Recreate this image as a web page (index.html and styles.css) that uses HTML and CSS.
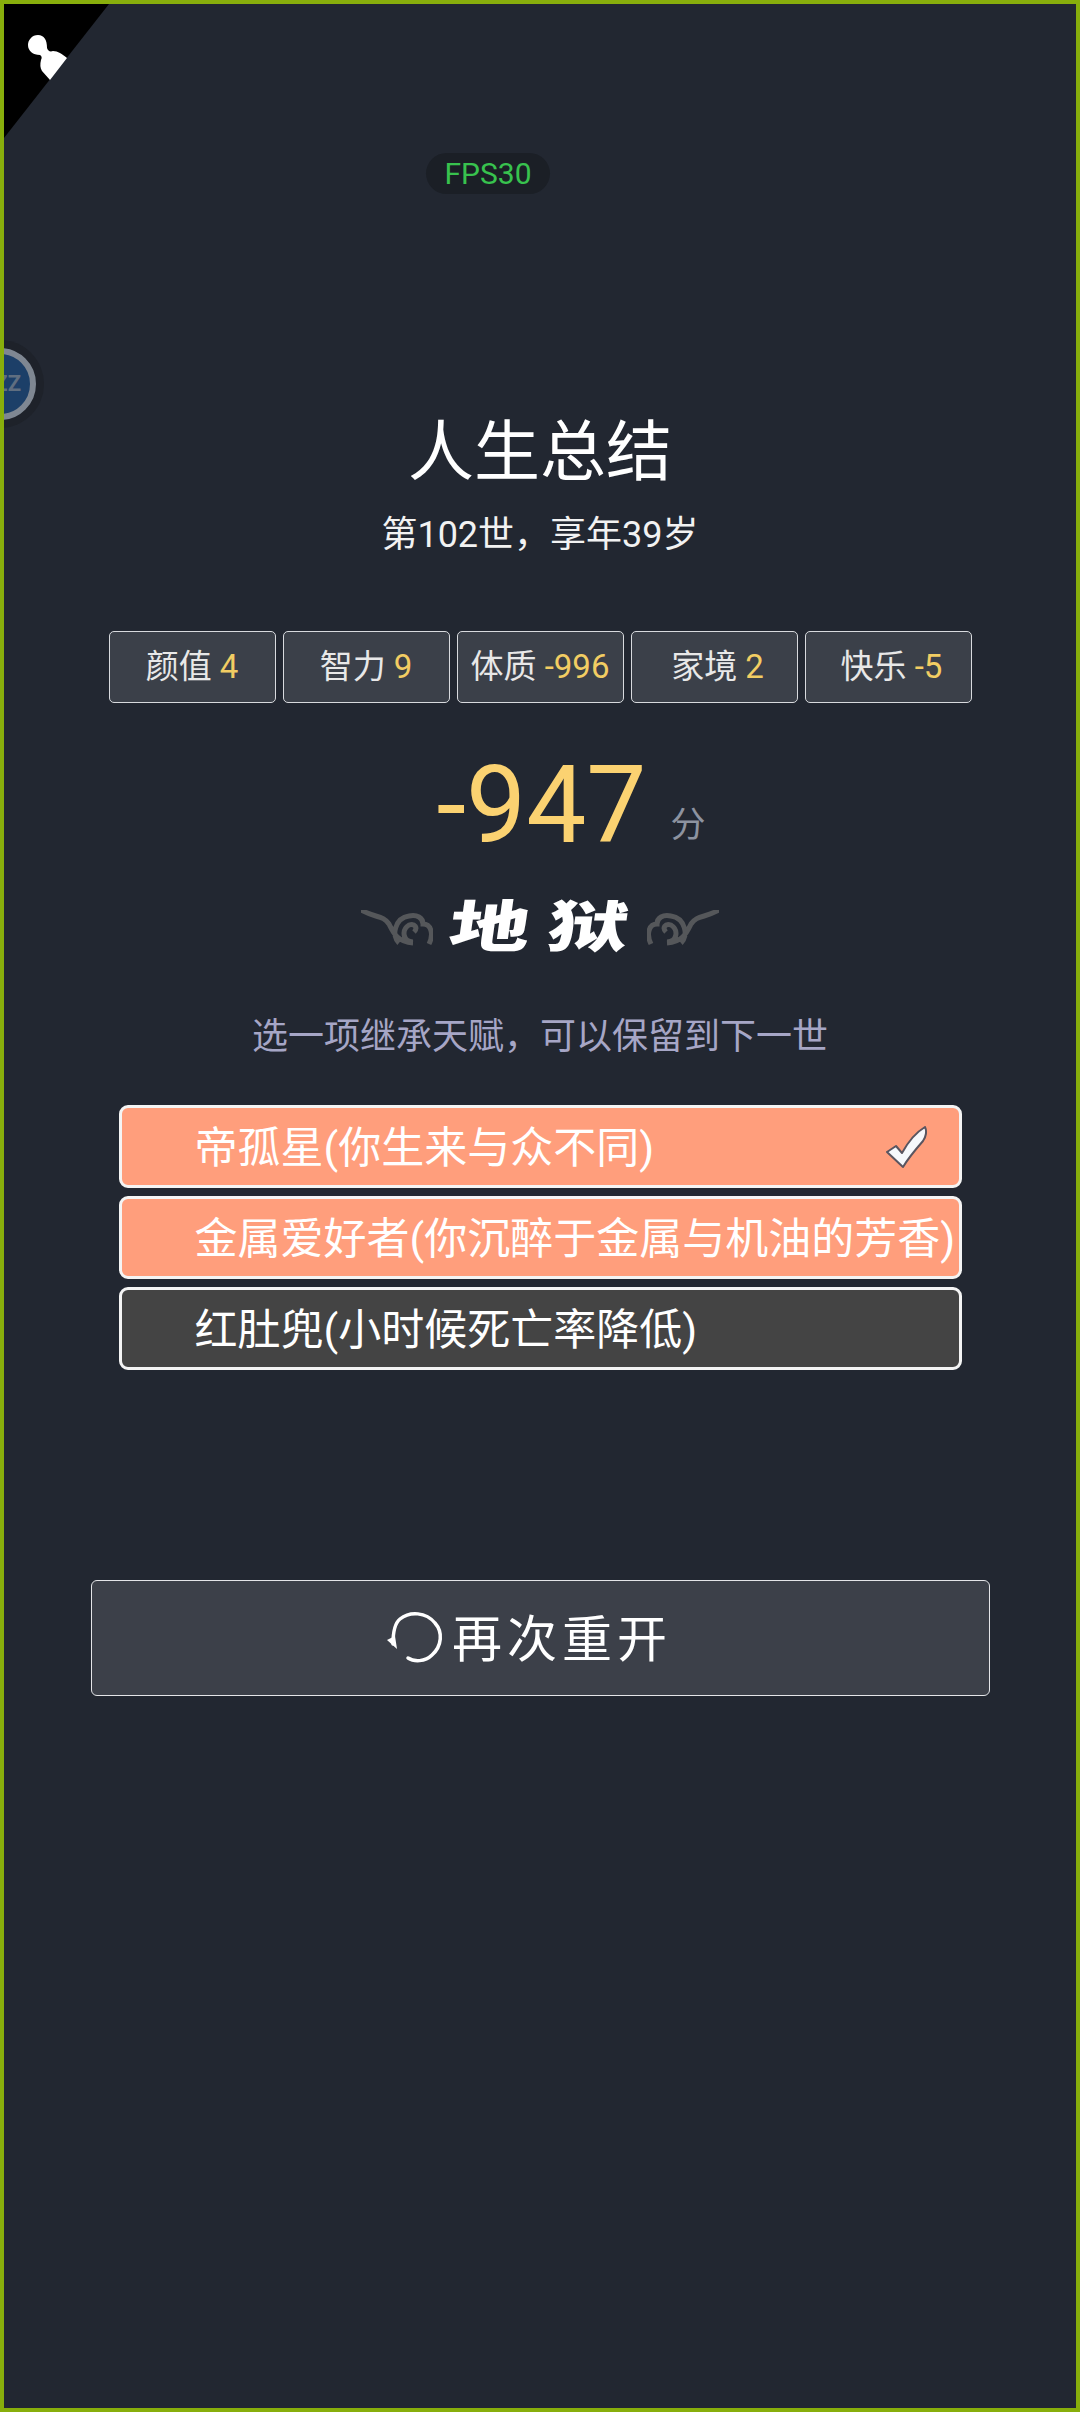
FILE: index.html
```html
<!DOCTYPE html>
<html lang="zh-CN">
<head>
    <meta charset="UTF-8">
    <title>人生总结</title>
    <link rel="stylesheet" href="styles.css">
</head>
<body>
    <div class="frame">
        <svg class="corner" width="105" height="134" viewBox="0 0 105 134">
            <polygon points="0,0 105,0 0,134" fill="#000"/>
            <path d="M34 31 C28 31 24 36 24 41 C24 47 29 51 36 51 C38 52 38 54 37 56 C36 60 36 64 38 67 L46 76 L63 54 C58 50 54 47 49 47 C46 48 44 47 43 44 C43 36 40 31 34 31 Z" fill="#fff"/>
        </svg>
        <div class="fps">FPS30</div>
        <div class="ball"><span>ZZ</span></div>

        <div class="main">
            <h1 class="title">人生总结</h1>
            <p class="sub">第102世，享年39岁</p>

            <div class="stats">
                <div class="stat">颜值 <b>4</b></div>
                <div class="stat">智力 <b>9</b></div>
                <div class="stat">体质 <b>-996</b></div>
                <div class="stat off">家境 <b>2</b></div>
                <div class="stat off">快乐 <b>-5</b></div>
            </div>

            <div class="score">-947<span>分</span></div>

            <div class="rank">
                <svg class="cloud" width="72" height="36" viewBox="0 0 72 36">
                    <path d="M0 0 C14 8 22 5 28 14 C32 22 36 32 52 33 M38 33 C30 26 34 8 48 6 C56 4 62 8 62 14 C70 14 73 24 68 34 M52 32 C42 32 40 20 48 15 C54 13 57 18 53 22" fill="none" stroke="#55575a" stroke-width="5"/>
                </svg>
                <span class="rank-text">地狱</span>
                <svg class="cloud flip" width="72" height="36" viewBox="0 0 72 36">
                    <path d="M0 0 C14 8 22 5 28 14 C32 22 36 32 52 33 M38 33 C30 26 34 8 48 6 C56 4 62 8 62 14 C70 14 73 24 68 34 M52 32 C42 32 40 20 48 15 C54 13 57 18 53 22" fill="none" stroke="#55575a" stroke-width="5"/>
                </svg>
            </div>

            <p class="prompt">选一项继承天赋，可以保留到下一世</p>

            <div class="options">
                <div class="option picked"><span class="option-text">帝孤星(你生来与众不同)</span>
                    <svg class="check" width="44" height="42" viewBox="0 0 44 42">
                        <path d="M2 26 L11 20 L17 27 C23 16 30 7 40 1 C42 5 41 11 38 15 C31 23 24 31 18 41 Z" fill="#f6f8fc" stroke="#5a5560" stroke-width="2" stroke-linejoin="round"/>
                    </svg>
                </div>
                <div class="option picked"><span class="option-text">金属爱好者(你沉醉于金属与机油的芳香)</span></div>
                <div class="option"><span class="option-text">红肚兜(小时候死亡率降低)</span></div>
            </div>

            <button class="again">
                <svg width="58" height="54" viewBox="-2 -1 58 54">
                    <path d="M20 46 C26 50 37 50 44 43 C54 34 55 20 47 11 C38 0 22 -1 12 7 C7 11 5 20 5 32" fill="none" stroke="#fff" stroke-width="3.5" stroke-linecap="round"/>
                    <path d="M-1 28 L9 37 L7 24 Z" fill="#fff"/>
                </svg>
                <span class="again-text">再次重开</span>
            </button>
        </div>
    </div>
</body>
</html>
```

FILE: styles.css
```css
html, body {
    margin: 0;
    padding: 0;
    background-color: #222731;
    font-family: Roboto, "Noto Sans CJK SC", sans-serif;
    color: #ffffff;
}

.frame {
    position: relative;
    box-sizing: border-box;
    width: 1080px;
    height: 2412px;
    border: 4px solid #88ae0c;
    overflow: hidden;
}

.corner {
    position: absolute;
    top: 0;
    left: 0;
}

.fps {
    position: absolute;
    top: 149px;
    left: 422px;
    width: 124px;
    height: 41px;
    border-radius: 21px;
    background-color: #1b1f26;
    color: #38c24e;
    font-size: 30px;
    line-height: 41px;
    text-align: center;
}

.ball {
    position: absolute;
    top: 344px;
    left: -40px;
    box-sizing: border-box;
    width: 72px;
    height: 72px;
    padding-right: 9px;
    border: 6px solid #7f8792;
    border-radius: 50%;
    background-color: #1c3f68;
    box-shadow: 0 0 0 8px #1e222a;
    color: #5f6e80;
    font-size: 22px;
    font-weight: bold;
    line-height: 60px;
    text-align: right;
}

.main {
    display: flex;
    flex-direction: column;
    align-items: center;
    padding-top: 409px;
}

.title {
    margin: 0;
    font-size: 66px;
    font-weight: normal;
    line-height: 80px;
}

.sub {
    margin: 17px 0 0;
    font-size: 36px;
    line-height: 50px;
    color: #f2f2f2;
}

.stats {
    display: grid;
    grid-template-columns: repeat(5, 167px);
    gap: 7px;
    margin-top: 71px;
}

.stat {
    box-sizing: border-box;
    height: 72px;
    border: 1.5px solid #d8dade;
    border-radius: 5px;
    background-color: #3b4049;
    font-size: 33px;
    line-height: 69px;
    text-align: center;
    color: #e8e8e8;
}

.stat.off {
    padding-left: 7px;
}

.stat b {
    font-weight: normal;
    color: #f2cd63;
}

.score {
    margin-top: 38px;
    height: 130px;
    padding-left: 62px;
    font-size: 107px;
    line-height: 130px;
    color: #fbd271;
}

.score span {
    margin-left: 24px;
    font-size: 35px;
    color: #8d93a0;
    vertical-align: 5px;
}

.rank {
    display: flex;
    align-items: center;
    justify-content: center;
    gap: 27px;
    height: 80px;
    margin-top: 17px;
}

.rank-text {
    font-size: 72px;
    font-weight: 900;
    line-height: 80px;
    letter-spacing: 16px;
    margin-right: -16px;
    transform: skewX(-8deg) scale(1.12, 0.78);
}

.cloud.flip {
    transform: scaleX(-1);
}

.prompt {
    margin: 44px 0 0;
    font-size: 36px;
    line-height: 50px;
    color: #a6a6c6;
}

.options {
    display: flex;
    flex-direction: column;
    gap: 8px;
    width: 843px;
    margin-top: 43px;
}

.option {
    display: flex;
    align-items: center;
    justify-content: space-between;
    box-sizing: border-box;
    height: 83px;
    padding: 0 30px 0 73px;
    border: 3px solid #f4f4f4;
    border-radius: 9px;
    background-color: #444444;
    font-size: 43px;
    white-space: nowrap;
}

.option-text {
    margin-bottom: 5px;
}

.option.picked {
    background-color: #ff9e7c;
}

.again {
    display: flex;
    align-items: center;
    justify-content: center;
    gap: 8px;
    box-sizing: border-box;
    width: 899px;
    height: 116px;
    margin-top: 210px;
    padding: 0 22px 0 0;
    border: 1.5px solid #e4e5e8;
    border-radius: 6px;
    background-color: #3c4049;
    color: #ffffff;
    font-family: inherit;
    font-size: 50px;
    letter-spacing: 5px;
}

.again-text {
    margin-bottom: 6px;
}
```
